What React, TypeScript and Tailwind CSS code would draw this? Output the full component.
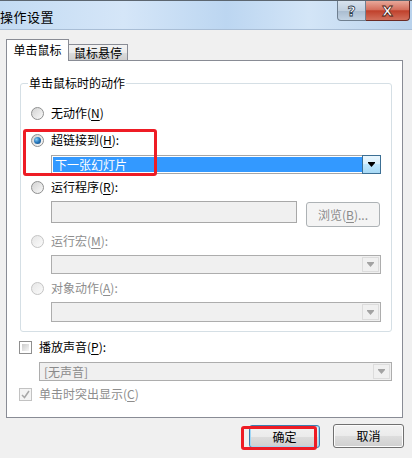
import React from "react";

const FONT = '"Microsoft YaHei", "Noto Sans CJK SC", "Noto Sans", sans-serif';

function U({ children }: { children: React.ReactNode }) {
  return <span className="underline underline-offset-2">{children}</span>;
}

function Radio({ checked, disabled }: { checked?: boolean; disabled?: boolean }) {
  return (
    <div
      className={
        "w-[13px] h-[13px] rounded-full border flex items-center justify-center shrink-0 " +
        (disabled
          ? "border-[#c4c4c4] bg-gradient-to-br from-[#e6e6e6] to-[#fbfbfb]"
          : "border-[#8e8f8f] bg-gradient-to-br from-[#d2d2d2] to-[#fafafa]")
      }
    >
      {checked && (
        <div className="w-[7px] h-[7px] rounded-full bg-[radial-gradient(circle_at_35%_35%,#8ccff4_0%,#2a7cc0_45%,#0d3f73_100%)]" />
      )}
    </div>
  );
}

function Arrow({ color = "#000" }: { color?: string }) {
  return (
    <svg width="7" height="5" viewBox="0 0 7 5">
      <rect x="0" y="0" width="7" height="1" fill={color} />
      <polygon points="0,1 7,1 3.5,5" fill={color} />
    </svg>
  );
}

function DisabledCombo({ w, h, text }: { w: string; h: string; text?: string }) {
  return (
    <div className={`${w} ${h} border border-[#adadad] bg-[#f0f0f0] flex items-stretch`}>
      <div className="flex-1 pl-[4px] flex items-center text-[12px] text-[#8a8a8a]">{text}</div>
      <div className="w-[17px] bg-[#f0f0f0] flex items-center justify-center m-px border border-[#dcdcdc]">
        <Arrow color="#a3a3a3" />
      </div>
    </div>
  );
}

export default function App() {
  return (
    <div
      className="w-[412px] h-[458px] bg-[#f0f0f0] relative overflow-hidden text-[12px] text-black"
      style={{ fontFamily: FONT }}
    >
      {/* title bar */}
      <div className="h-[30px] border-t border-[#5c6670] border-b border-b-[#a9bed6] bg-[linear-gradient(90deg,#c3dbf3_0%,#d5e6f8_30%,#bcd6f1_55%,#d3e5f7_75%,#b9d2ec_100%)] flex items-start justify-between">
        <div className="text-[13px] leading-none mt-[9px] tracking-[0.5px]">操作设置</div>
        <div className="flex items-start mr-[2px]">
          <div className="w-[29px] h-[20px] rounded-bl-[4px] border border-t-0 border-[#6f7f90] bg-[linear-gradient(180deg,#d8e3ee_0%,#c1d0df_50%,#a9bcd0_52%,#c2d3e4_100%)] flex items-center justify-center">
            <span className="text-white font-bold text-[14px] leading-none [-webkit-text-stroke:0.8px_#2e3c4c] [font-family:'DejaVu_Sans',sans-serif]">?</span>
          </div>
          <div className="w-[44px] h-[20px] rounded-br-[4px] border border-t-0 border-l-0 border-[#6b2a24] bg-[linear-gradient(180deg,#e8a89a_0%,#d4705e_45%,#c0412c_52%,#d2705c_100%)] flex items-center justify-center">
            <span className="text-white font-bold text-[14px] leading-none [-webkit-text-stroke:0.8px_#4a1a14] [font-family:'DejaVu_Sans',sans-serif]">X</span>
          </div>
        </div>
      </div>

      {/* tabs */}
      <div className="flex items-end ml-[6px] mt-[9px]">
        <div className="w-[63px] h-[22px] -mb-px relative z-10 bg-white border border-b-0 border-[#898c95] flex items-center justify-center text-[12px] leading-none pb-[1px]">
          单击鼠标
        </div>
        <div className="w-[59px] h-[16px] border border-b-0 border-l-0 border-[#898c95] bg-[linear-gradient(180deg,#f3f3f3_0%,#ebebeb_50%,#dcdcdc_52%,#cfcfcf_100%)] flex items-center justify-center text-[12px] leading-none">
          鼠标悬停
        </div>
      </div>

      {/* panel */}
      <div className="ml-[6px] w-[397px] h-[358px] bg-white border border-[#898c95] flex flex-col">
        {/* group box */}
        <div className="relative ml-[13px] mt-[22px] w-[372px] h-[249px] border border-[#d5dfe5] rounded-[3px] flex flex-col pl-[10px]">
          <div className="absolute left-[7px] top-[-9px] bg-white px-[1px] text-[12px] leading-[16px]">单击鼠标时的动作</div>

          <div className="mt-[21px] h-[16px] flex items-center gap-[7px]">
            <Radio />
            <span className="leading-none">无动作(<U>N</U>)</span>
          </div>
          <div className="mt-[11px] h-[16px] flex items-center gap-[7px]">
            <Radio checked />
            <span className="leading-none">超链接到(<U>H</U>):</span>
          </div>
          <div className="mt-[7px] ml-[20px] w-[330px] h-[19px] border border-[#a6a6a6] bg-white flex items-stretch p-px">
            <div className="flex-1 bg-[#3399ff] text-white flex items-center pl-[2px] leading-none">
              下一张幻灯片
            </div>
            <div className="w-[19px] -my-[2px] -mr-[2px] border border-[#3c6f94] bg-[linear-gradient(180deg,#eaf6fd_0%,#d9f0fc_45%,#bee6fd_50%,#a7d9f5_100%)] flex items-center justify-center">
              <Arrow />
            </div>
          </div>
          <div className="mt-[5px] h-[16px] flex items-center gap-[7px]">
            <Radio />
            <span className="leading-none">运行程序(<U>R</U>):</span>
          </div>
          <div className="mt-[6px] ml-[20px] h-[26px] flex items-start">
            <div className="w-[246px] h-[22px] border border-[#a8a8a8] bg-[#f0f0f0]" />
            <div className="ml-[9px] mt-px w-[74px] h-[25px] rounded-[3px] border border-[#adb2b5] bg-[#f4f4f4] flex items-center justify-center text-[#8b8b8b] leading-none">
              浏览(<U>B</U>)...
            </div>
          </div>
          <div className="mt-[6px] h-[16px] flex items-center gap-[7px] text-[#8d8d8d]">
            <Radio disabled />
            <span className="leading-none">运行宏(<U>M</U>):</span>
          </div>
          <div className="mt-[6px] ml-[20px]">
            <DisabledCombo w="w-[330px]" h="h-[19px]" />
          </div>
          <div className="mt-[6px] h-[16px] flex items-center gap-[7px] text-[#8d8d8d]">
            <Radio disabled />
            <span className="leading-none">对象动作(<U>A</U>):</span>
          </div>
          <div className="mt-[6px] ml-[20px]">
            <DisabledCombo w="w-[330px]" h="h-[20px]" />
          </div>
        </div>

        {/* sound */}
        <div className="mt-[7px] ml-[12px] h-[16px] flex items-center gap-[7px]">
          <div className="w-[13px] h-[13px] border border-[#8f8f8f] bg-white p-[2px]">
            <div className="w-full h-full bg-gradient-to-br from-[#cbcbcb] to-[#f6f6f6]" />
          </div>
          <span className="leading-none">播放声音(<U>P</U>):</span>
        </div>
        <div className="mt-[7px] ml-[32px]">
          <DisabledCombo w="w-[353px]" h="h-[19px]" text="[无声音]" />
        </div>
        <div className="mt-[5px] ml-[12px] h-[16px] flex items-center gap-[7px] text-[#8d8d8d]">
          <div className="w-[13px] h-[13px] border border-[#c2c2c2] bg-[#f4f4f4] flex items-center justify-center">
            <svg width="9" height="9" viewBox="0 0 9 9">
              <path d="M1 5 L3.5 7.5 L8 1" stroke="#a8a8a8" strokeWidth="1.5" fill="none" />
            </svg>
          </div>
          <span className="leading-none">单击时突出显示(<U>C</U>)</span>
        </div>
      </div>

      {/* buttons */}
      <div className="mt-[7px] mr-[8px] flex justify-end gap-[13px]">
        <div className="w-[71px] h-[23px] rounded-[3px] border border-[#3c7fb1] shadow-[inset_0_0_0_1px_#9fd6f5] bg-[linear-gradient(180deg,#f2f2f2_0%,#ebebeb_50%,#dddddd_52%,#cfcfcf_100%)] flex items-center justify-center leading-none">
          确定
        </div>
        <div className="w-[71px] h-[24px] -mt-px rounded-[3px] border border-[#707070] shadow-[inset_0_0_0_1px_#fcfcfc] bg-[linear-gradient(180deg,#f2f2f2_0%,#ebebeb_50%,#dddddd_52%,#cfcfcf_100%)] flex items-center justify-center leading-none">
          取消
        </div>
      </div>

      {/* red annotation boxes */}
      <div className="absolute left-[23px] top-[129px] w-[134px] h-[47px] border-[3px] border-[#ee1c25] rounded-[3px]" />
      <div className="absolute left-[241px] top-[426px] w-[76px] h-[24px] border-[3px] border-[#ee1c25] rounded-[3px]" />
    </div>
  );
}
